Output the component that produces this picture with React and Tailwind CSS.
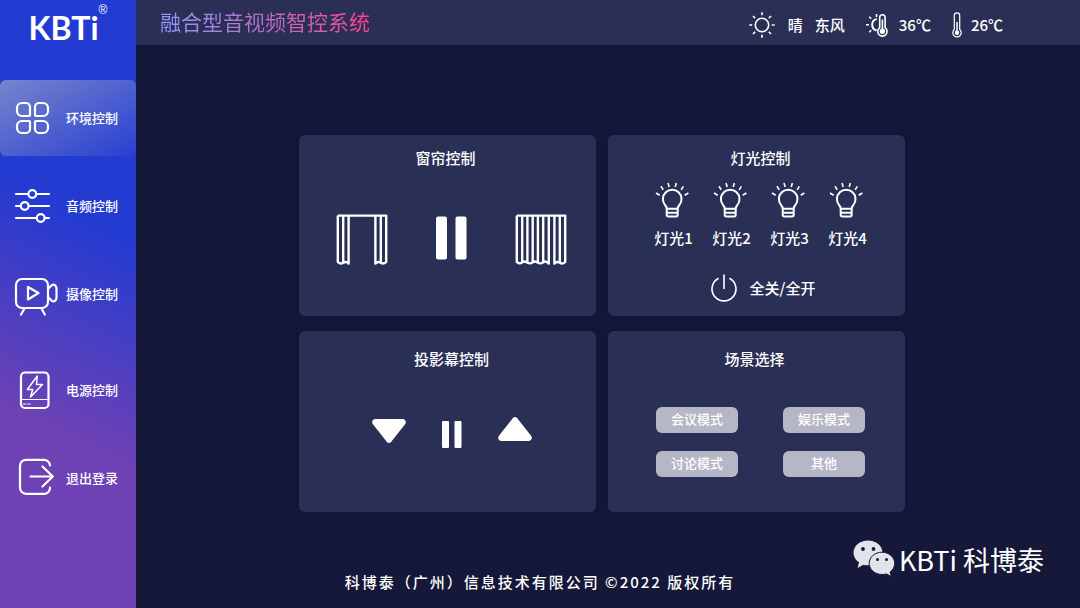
import React, { useState } from 'react';

const NAV_MAIN = [
  { id: 'env', label: '环境控制', icon: <GridIcon /> },
  { id: 'audio', label: '音频控制', icon: <SlidersIcon /> },
  { id: 'camera', label: '摄像控制', icon: <CameraIcon /> },
];

const NAV_SYSTEM = [
  { id: 'power', label: '电源控制', icon: <BatteryIcon /> },
  { id: 'logout', label: '退出登录', icon: <LogoutIcon /> },
];

const LIGHTS = ['灯光1', '灯光2', '灯光3', '灯光4'];
const SCENES = ['会议模式', '娱乐模式', '讨论模式', '其他'];

export default function App() {
  const [active, setActive] = useState('env');

  return (
    <div className="relative flex min-h-screen bg-[#151838] text-white font-['Noto_Sans_CJK_SC',sans-serif]">
      <aside className="w-34 shrink-0 bg-[linear-gradient(205deg,#233bd1_36%,#6e42b4_70%)]">
        <div className="flex h-20 justify-center pt-1">
          <span className="text-[32px] leading-12 font-bold font-['Lato',sans-serif]">KBTi</span>
          <span className="text-xs leading-3 font-['Liberation_Sans',sans-serif]">®</span>
        </div>
        <nav className="flex flex-col gap-5">
          <NavGroup items={NAV_MAIN} active={active} onSelect={setActive} />
          <NavGroup items={NAV_SYSTEM} active={active} onSelect={setActive} />
        </nav>
      </aside>

      <div className="flex min-w-0 flex-1 flex-col">
        <header className="flex h-[45px] items-center justify-between bg-[#2b2f56] pr-[77px] pl-6">
          <h1 className="bg-linear-to-r from-[#8f97ff] via-[#b56cc0] to-[#ff3d8b] bg-clip-text pb-1 text-[21px] leading-8 text-transparent">融合型音视频智控系统</h1>
          <div className="flex items-center pt-1 text-[15px] leading-6 font-medium">
            <SunIcon />
            <span className="ml-3">晴</span>
            <span className="ml-3">东风</span>
            <SunThermoIcon />
            <span className="ml-2">36℃</span>
            <ThermoIcon />
            <span className="ml-2">26℃</span>
          </div>
        </header>

        <main className="flex-1 pt-[90px] pr-3">
          <div className="mx-auto grid max-w-[606px] grid-cols-2 gap-x-3 gap-y-[15px]">
            <Card>
              <h2 className="pt-[11px] pr-1 text-center text-[15px] leading-6 font-medium">窗帘控制</h2>
              <div className="flex flex-1 items-center justify-center gap-12 pb-1.5 pl-2">
                <button aria-label="打开窗帘"><CurtainOpenIcon /></button>
                <button aria-label="暂停窗帘"><PauseIcon /></button>
                <button aria-label="关闭窗帘"><CurtainClosedIcon /></button>
              </div>
            </Card>

            <Card>
              <div className="flex flex-col items-center pl-2">
                <h2 className="pt-[11px] text-[15px] leading-6 font-medium">灯光控制</h2>
                <div className="mt-3 grid grid-cols-4 pr-1">
                  {LIGHTS.map(name => (
                    <button key={name} className="flex w-[58px] flex-col items-center gap-2 text-[15px] leading-6 font-medium">
                      <BulbIcon />
                      <span className="pl-1">{name}</span>
                    </button>
                  ))}
                </div>
                <button className="mt-6 flex items-center gap-3 pl-1 text-[15px] leading-6 font-medium">
                  <PowerIcon />全关/全开
                </button>
              </div>
            </Card>

            <Card>
              <div className="flex flex-1 flex-col pl-2">
                <h2 className="pt-4 text-center text-[15px] leading-6 font-medium">投影幕控制</h2>
                <div className="flex flex-1 items-center justify-center gap-9 pb-5">
                  <button aria-label="降下幕布"><DownIcon /></button>
                  <button aria-label="暂停幕布"><SmallPauseIcon /></button>
                  <button aria-label="升起幕布"><UpIcon /></button>
                </div>
              </div>
            </Card>

            <Card>
              <div className="flex flex-col items-center pl-2">
                <h2 className="pt-4 pr-3 text-[15px] leading-6 font-medium">场景选择</h2>
                <div className="mt-9 grid grid-cols-2 gap-x-[45px] gap-y-[18px]">
                  {SCENES.map(name => (
                    <button key={name} className="h-[26px] w-[82px] rounded-md bg-[#b5b6c6] pb-0.5 text-[13px] leading-6 font-medium">{name}</button>
                  ))}
                </div>
              </div>
            </Card>
          </div>
        </main>

        <footer className="pr-[136px] pb-[14px] text-center text-[15px] leading-6 font-medium tracking-[2px]">
          科博泰（广州）信息技术有限公司 ©2022 版权所有
        </footer>
      </div>

      <div className="absolute right-9 bottom-7 flex items-center gap-1">
        <WechatIcon />
        <span className="text-[27px] leading-9">KBTi 科博泰</span>
      </div>
    </div>
  );
}

function NavGroup({ items, active, onSelect }) {
  return (
    <div className="flex flex-col gap-3">
      {items.map(item => (
        <button
          key={item.id}
          onClick={() => onSelect(item.id)}
          className={`flex h-19 w-full items-center gap-2 rounded-md pl-3.5 text-[13px] font-medium ${active === item.id ? 'bg-linear-to-br from-[#8c96cc]/80 to-[#8c96cc]/5' : ''}`}
        >
          {item.icon}
          <span>{item.label}</span>
        </button>
      ))}
    </div>
  );
}

function Card({ children }) {
  return (
    <section className="flex min-h-[181px] flex-col rounded-md bg-[#2a2f55] shadow-[0_0_6px_#10123a]">
      {children}
    </section>
  );
}

function NavSvg({ children }) {
  return (
    <svg width="44" height="44" viewBox="0 0 44 44" fill="none" stroke="currentColor" strokeWidth="2.200" strokeLinecap="round" strokeLinejoin="round">
      {children}
    </svg>
  );
}

function GridIcon() {
  return (
    <NavSvg>
      <path d="M8 7h4a4 4 0 0 1 4 4v8a1 1 0 0 1-1 1H8a5 5 0 0 1-5-5v-3a5 5 0 0 1 5-5z" />
      <path d="M25 7h4a5 5 0 0 1 5 5v3a5 5 0 0 1-5 5h-7a1 1 0 0 1-1-1v-8a4 4 0 0 1 4-4z" />
      <path d="M8 25h7a1 1 0 0 1 1 1v7a4 4 0 0 1-4 4H8a5 5 0 0 1-5-5v-2a5 5 0 0 1 5-5z" />
      <path d="M22 25h7a5 5 0 0 1 5 5v2a5 5 0 0 1-5 5h-4a4 4 0 0 1-4-4v-7a1 1 0 0 1 1-1z" />
    </NavSvg>
  );
}

function SlidersIcon() {
  return (
    <NavSvg>
      <path d="M2 10h12M22.500 10H35M2 22h4.500M15 22h20M2 34h20.500M31 34h4" />
      <circle cx="18.300" cy="10" r="3.900" />
      <circle cx="10.700" cy="22" r="3.900" />
      <circle cx="26.700" cy="34" r="3.900" />
    </NavSvg>
  );
}

function CameraIcon() {
  return (
    <NavSvg>
      <rect x="2" y="7" width="32" height="29" rx="6" />
      <path d="M14 15v12.500L24.500 21z" />
      <path d="M34.500 16.500l3.500-3.500c2.500-1 4.500 1 4.500 3.500v9c0 2.500-2 4.500-4.500 3.500l-3.500-3.500" />
      <path d="M10.500 36.500L7 42.500M27.500 36.500l3.300 6" />
    </NavSvg>
  );
}

function BatteryIcon() {
  return (
    <NavSvg>
      <rect x="7" y="4.500" width="27.500" height="35.500" rx="4" />
      <path strokeWidth="1.200" d="M7 31.500h27.500M9.500 36h2.500M13.800 36h2.500" />
      <path strokeWidth="1.500" d="M23.300 8L13.300 21.500h5.400L16.500 29l12-12.500h-6z" />
    </NavSvg>
  );
}

function LogoutIcon() {
  return (
    <NavSvg>
      <path d="M36 9.500A6 6 0 0 0 30 3.800H12A6 6 0 0 0 6 9.800v22a6 6 0 0 0 6 6h18A6 6 0 0 0 36 31.500" />
      <path d="M16.500 20.500h22.300M28.500 10.500l10.300 10-10.300 10" />
    </NavSvg>
  );
}

function SunIcon() {
  return (
    <svg width="28" height="28" viewBox="0 0 28 28" fill="none" stroke="currentColor" strokeWidth="1.600">
      <circle cx="14" cy="14" r="6.700" />
      <path d="M14 1.300v2.900M14 23.800v2.900M1.300 14h2.900M23.800 14h2.900M5 5l2.200 2.200M20.800 20.800L23 23M5 23l2.200-2.200M20.800 7.200L23 5" />
    </svg>
  );
}

function SunThermoIcon() {
  return (
    <svg className="ml-5 mr-0.5" width="24" height="24" viewBox="0 0 24 24" fill="none" stroke="currentColor" strokeWidth="1.600">
      <path strokeWidth="2" d="M11.800 5.900a6 6 0 0 0-.3 11.600" />
      <path d="M1 11.700h3M4.200 3.800l2 2M4.200 19.300l2-2M11.500 1v3" />
      <path d="M14.700 14.600V4.500a2.700 2.700 0 0 1 5.400 0v10.100a4.700 4.700 0 1 1-5.400 0z" />
      <path d="M17.400 6.500v10" />
      <circle cx="17.400" cy="18.300" r="1.900" fill="currentColor" />
    </svg>
  );
}

function ThermoIcon() {
  return (
    <svg className="ml-5" width="12" height="26" viewBox="0 0 12 26" fill="none" stroke="currentColor" strokeWidth="1.200">
      <path d="M3.300 17.500V3.500a2.700 2.700 0 0 1 5.400 0v14a4.200 4.200 0 1 1-5.400 0z" />
      <path strokeWidth="1.500" d="M6 10v10" />
      <circle cx="6" cy="20.800" r="1.600" fill="currentColor" />
    </svg>
  );
}

function CurtainOpenIcon() {
  return (
    <svg width="52" height="52" viewBox="0 0 52 52" fill="none" stroke="currentColor" strokeWidth="2.400" strokeLinejoin="round">
      <path d="M1.800 1.600h48.400v46.200q-2.700 2.800-5.400 1-2.700-2-5.400.8V1.600M44.800 1.600v46.800M1.800 1.600v46.200q2.700 2.800 5.400 1 2.700-2 5.400.8V1.600M7.200 1.600v46.800" />
    </svg>
  );
}

function CurtainClosedIcon() {
  return (
    <svg width="52" height="52" viewBox="0 0 52 52" fill="none" stroke="currentColor" strokeWidth="2.400" strokeLinejoin="round">
      <path d="M1.800 1.600h48.400v46.200q-2.700 2.800-5.400 1-2.700-2-5.400.8V1.600M44.800 1.600v46.800" />
      <path d="M1.800 1.600v46.200q2.700 2.800 5.400.5 2.600-1.800 5.200.5 2.700 1.400 5.300-.5 2.600-1.800 5.200.5 2.700 1.400 5.300-.5 2.700-2 5.600 1.300V1.600" />
      <path d="M7.200 1.600v46.800M12.400 1.600v46.800M17.700 1.600v46.800M22.900 1.600v46.800M28.200 1.600v46.800" />
    </svg>
  );
}

function PauseIcon() {
  return (
    <svg width="31" height="48" viewBox="0 0 31 48" fill="currentColor">
      <rect x="0" y="0.500" width="11" height="43" rx="2" />
      <rect x="19.500" y="0.500" width="11" height="43" rx="2" />
    </svg>
  );
}

function BulbIcon() {
  return (
    <svg width="36" height="36" viewBox="0 0 36 36" fill="none" stroke="currentColor" strokeWidth="2" strokeLinejoin="round">
      <path d="M12.700 26.800c0-2-.7-2.700-1.600-3.700a9.300 9.300 0 1 1 14.200 0c-.9 1-1.600 1.700-1.600 3.700z" />
      <path d="M12.700 26.800v6q0 1.700 1.700 1.700H22q1.700 0 1.700-1.700v-6M12.700 30.700h11" />
      <path strokeWidth="1.600" d="M2 11l3.700 2.300M7 4.300l2.200 3.500M14 1l1.200 4M22.400 1l-1.200 4M29.300 4.300l-2.100 3.500M34.400 11l-3.700 2.300" />
    </svg>
  );
}

function PowerIcon() {
  return (
    <svg width="28" height="28" viewBox="0 0 28 28" fill="none" stroke="currentColor" strokeWidth="1.600">
      <path d="M14 0.500v14.500M8.600 4.200a12 12 0 1 0 10.800 0" />
    </svg>
  );
}

function DownIcon() {
  return (
    <svg width="34" height="32" viewBox="0 0 34 32" fill="currentColor">
      <path d="M3.500 3h27c3 0 4.400 3.200 2.400 5.500L20 24.800c-1.700 2.900-4.300 2.900-6 0L1.100 8.500C-.9 6.200.5 3 3.500 3z" />
    </svg>
  );
}

function SmallPauseIcon() {
  return (
    <svg width="20" height="32" viewBox="0 0 20 32" fill="currentColor">
      <rect x="0" y="5" width="7" height="27" rx="1" />
      <rect x="12.500" y="5" width="7" height="27" rx="1" />
    </svg>
  );
}

function UpIcon() {
  return (
    <svg width="34" height="32" viewBox="0 0 34 32" fill="currentColor">
      <path d="M3.500 25h27c3 0 4.400-3.200 2.400-5.500L20 3.200c-1.700-2.900-4.300-2.900-6 0L1.100 19.500C-.9 21.800.5 25 3.500 25z" />
    </svg>
  );
}

function WechatIcon() {
  return (
    <svg width="42" height="40" viewBox="0 0 42 40" fill="#e3e4e9">
      <path d="M15 0.500C7 .5.500 5.900.500 12.700c0 3.900 2.100 7.300 5.500 9.600L4.700 28l5.600-3.300c1.500.4 3 .6 4.700.6 8 0 14.500-5.500 14.500-12.500S23 .5 15 .5z" />
      <path stroke="#151838" d="M29 12.200c-7.200 0-12.800 5-12.800 11.100S21.800 34.500 29 34.500c1.500 0 3-.2 4.300-.6l5 2.600-1.200-4.400c2.800-2.100 4.600-5.200 4.600-8.800 0-6.100-5.700-11.100-12.700-11.100z" />
      <g fill="#151838">
        <circle cx="10" cy="9" r="1.900" />
        <circle cx="20.500" cy="9" r="1.900" />
        <circle cx="24.500" cy="19.500" r="1.500" />
        <circle cx="33.500" cy="19.500" r="1.500" />
      </g>
    </svg>
  );
}
